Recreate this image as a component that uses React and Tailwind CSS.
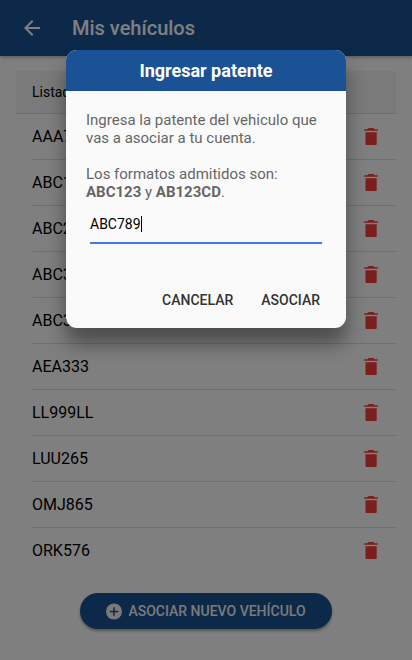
const plates = ['AAA777', 'ABC123', 'ABC234', 'ABC345', 'ABC356', 'AEA333', 'LL999LL', 'LUU265', 'OMJ865', 'ORK576'];

function TrashIcon() {
  return (
    <svg className="mr-[18px] h-[17px] w-[14px] text-[#f53d3d]" viewBox="0 0 14 17" fill="currentColor">
      <path d="M1.5 4.2h11.2V16q0 1-1 1H2.5q-1 0-1-1zM0.2 1.2h3.2L4.6 0h4.8l1.2 1.2h3.2v1.5H.2z" />
    </svg>
  );
}

function BackIcon() {
  return (
    <svg className="ml-6 h-4 w-4 text-white" viewBox="0 0 16 16" fill="currentColor">
      <path d="M16 7H3.8l5.6-5.6L8 0 0 8l8 8 1.4-1.4L3.8 9H16z" />
    </svg>
  );
}

function AddIcon() {
  return (
    <svg className="mt-px h-[17px] w-4" viewBox="0 0 16 17">
      <circle cx="8" cy="8.5" r="8" fill="currentColor" />
      <path d="M8 4.2v8.6M3.7 8.5h8.6" stroke="#1b5295" strokeWidth="1.5" />
    </svg>
  );
}

export default function App() {
  return (
    <div className="relative h-[660px] w-[412px] overflow-hidden bg-white font-['Roboto',sans-serif] text-black">
      <header className="flex h-14 items-center bg-[#1b5295] shadow-[0_1px_4px_rgba(0,0,0,0.35)]">
        <BackIcon />
        <h1 className="ml-8 text-[20px] leading-6 font-medium text-white">Mis vehículos</h1>
      </header>

      <main className="px-4 pt-[15px]">
        <div className="flex h-[43px] items-center border-b border-[#dedede] bg-[#f4f4f4] pl-4 text-[14px]">Listado de vehículos</div>
        <ul className="pl-4">
          {plates.map((plate) => (
            <li key={plate} className="flex h-[46px] items-center justify-between border-b border-[#dedede] text-[16px] last:border-transparent">
              <span>{plate}</span>
              <TrashIcon />
            </li>
          ))}
        </ul>
        <button className="mx-auto mt-[19px] flex h-9 w-[252px] items-center justify-center gap-1.5 rounded-full bg-[#1b5295] text-[14px] font-medium whitespace-nowrap text-[#f4f4f4] shadow-[0_2px_3px_rgba(0,0,0,0.35)]">
          <AddIcon />
          ASOCIAR NUEVO VEHÍCULO
        </button>
      </main>

      <div className="absolute inset-0 bg-black/50">
        <section className="mx-auto mt-[50px] flex h-[278px] w-[280px] flex-col overflow-hidden rounded-[11px] bg-[#fafafa] shadow-[0_16px_20px_rgba(0,0,0,0.4)]">
          <h2 className="flex h-[41px] items-center justify-center bg-[#1b5295] text-[18px] font-bold text-white">Ingresar patente</h2>
          <div className="px-5 pt-5 text-[15px] leading-[18px] text-[#666]">
            <p className="whitespace-nowrap">Ingresa la patente del vehiculo que<br />vas a asociar a tu cuenta.</p>
            <p className="mt-[18px]">Los formatos admitidos son:<br /><b>ABC123</b> y <b>AB123CD</b>.</p>
          </div>
          <div className="mx-6 mt-3 flex h-[31px] items-start border-b-2 border-[#3f7be0] pt-[3px] text-[14px] leading-4 text-black">
            <span>ABC789</span>
            <span className="h-4 w-px bg-black" />
          </div>
          <div className="mt-[46px] flex justify-end gap-7 pr-[26px] text-[14px] leading-5 font-medium text-[#333]">
            <button>CANCELAR</button>
            <button>ASOCIAR</button>
          </div>
        </section>
      </div>
    </div>
  );
}
